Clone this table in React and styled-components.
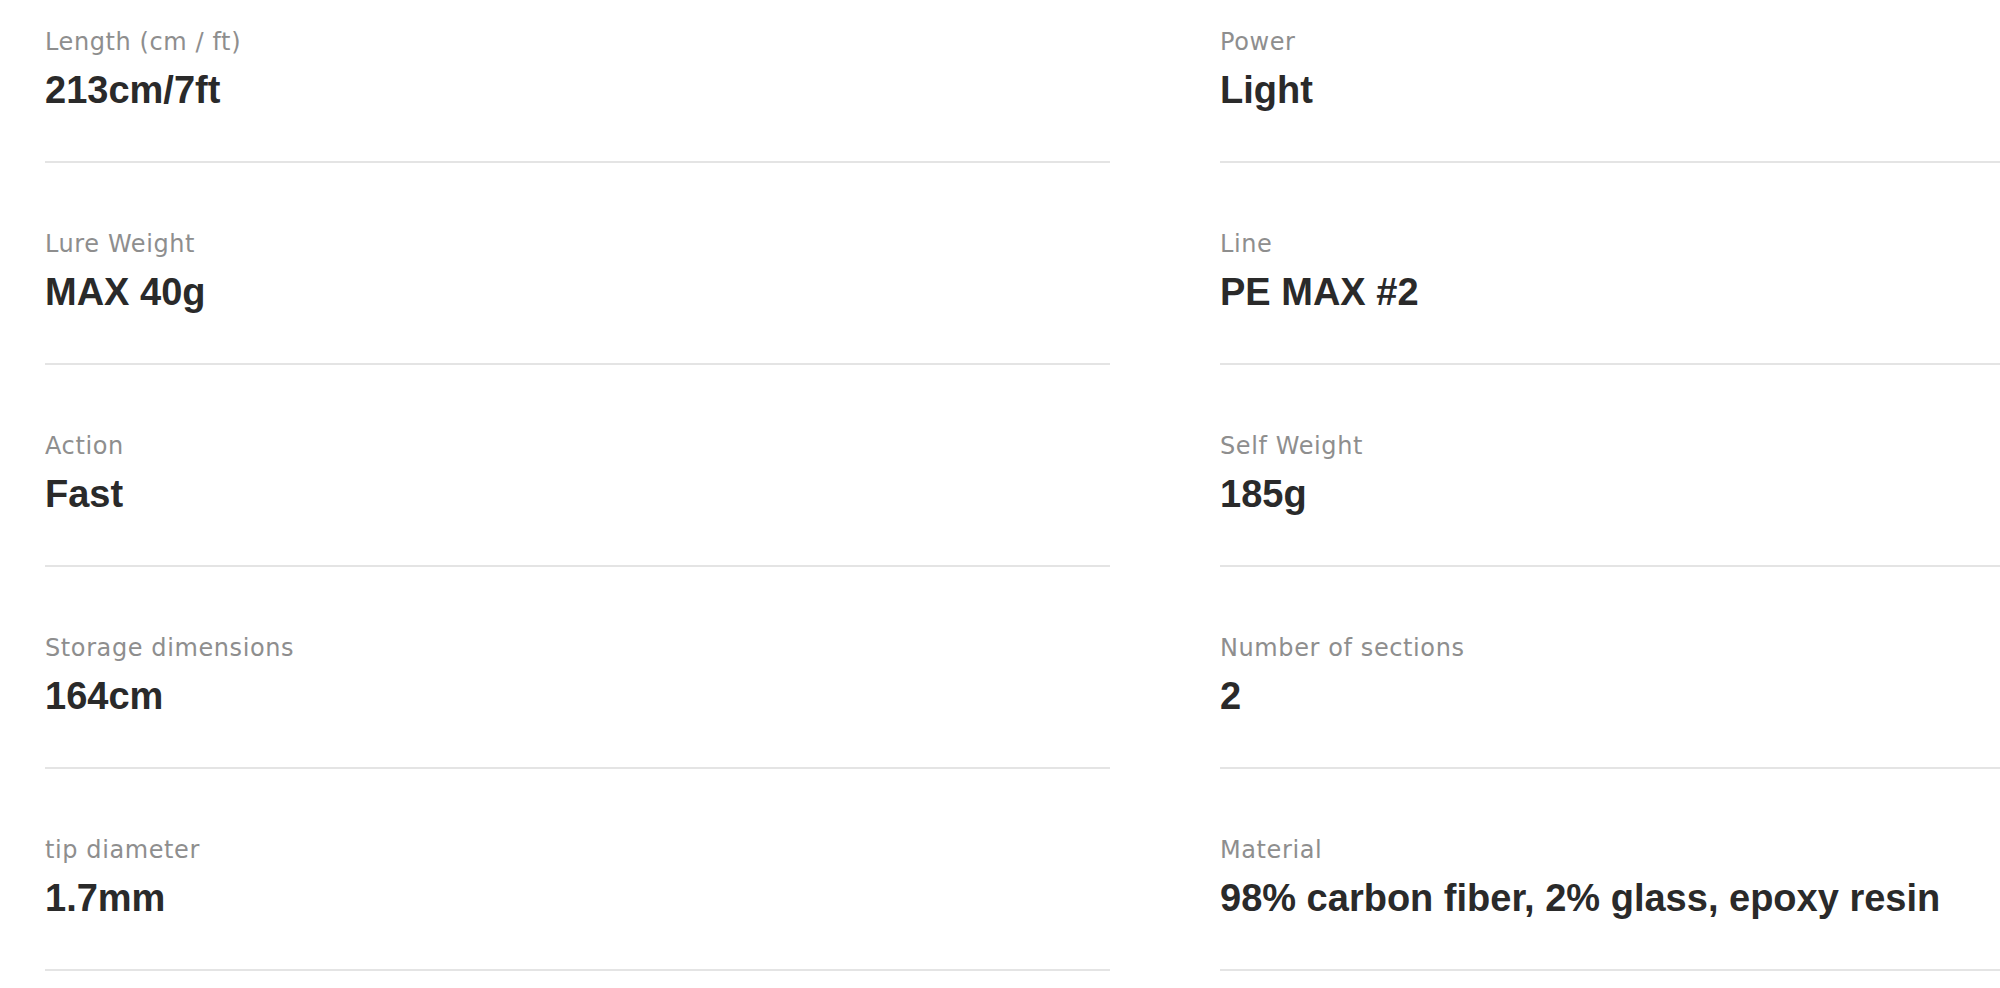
import React from 'react'
import styled, { createGlobalStyle } from 'styled-components'

const GlobalStyle = createGlobalStyle`
  html, body {
    margin: 0;
    padding: 0;
    background: #fff;
    overflow: hidden;
  }
`

const specs = [
  { label: 'Length (cm / ft)', value: '213cm/7ft' },
  { label: 'Power', value: 'Light' },
  { label: 'Lure Weight', value: 'MAX 40g' },
  { label: 'Line', value: 'PE MAX #2' },
  { label: 'Action', value: 'Fast' },
  { label: 'Self Weight', value: '185g' },
  { label: 'Storage dimensions', value: '164cm' },
  { label: 'Number of sections', value: '2' },
  { label: 'tip diameter', value: '1.7mm' },
  { label: 'Material', value: '98% carbon fiber, 2% glass, epoxy resin' },
]

const App = () => {
  return (
    <>
      <GlobalStyle />
      <Page>
        <SpecGrid>
          {specs.map((spec) => (
            <SpecItem key={spec.label}>
              <SpecLabel>{spec.label}</SpecLabel>
              <SpecValue>{spec.value}</SpecValue>
            </SpecItem>
          ))}
        </SpecGrid>
      </Page>
    </>
  )
}

export default App

const Page = styled.div`
  width: 100vw;
  height: 100vh;
  overflow: hidden;
  padding: 28px 0 0 45px;
  box-sizing: border-box;
`

const SpecGrid = styled.dl`
  margin: 0;
  display: grid;
  grid-template-columns: 1065px 1065px;
  column-gap: 110px;
  row-gap: 67px;
`

const SpecItem = styled.div`
  display: flex;
  flex-direction: column;
  padding-bottom: 48px;
  border-bottom: 2px solid #e4e4e4;
`

const SpecLabel = styled.dt`
  font-family: "DejaVu Sans", "Noto Sans CJK JP", sans-serif;
  font-size: 24px;
  line-height: 29px;
  letter-spacing: 0.6px;
  color: #8e8e8e;
`

const SpecValue = styled.dd`
  margin: 10px 0 0;
  font-family: "Liberation Sans", Arial, sans-serif;
  font-weight: bold;
  font-size: 38px;
  line-height: 46px;
  color: #2a2a2a;
`
